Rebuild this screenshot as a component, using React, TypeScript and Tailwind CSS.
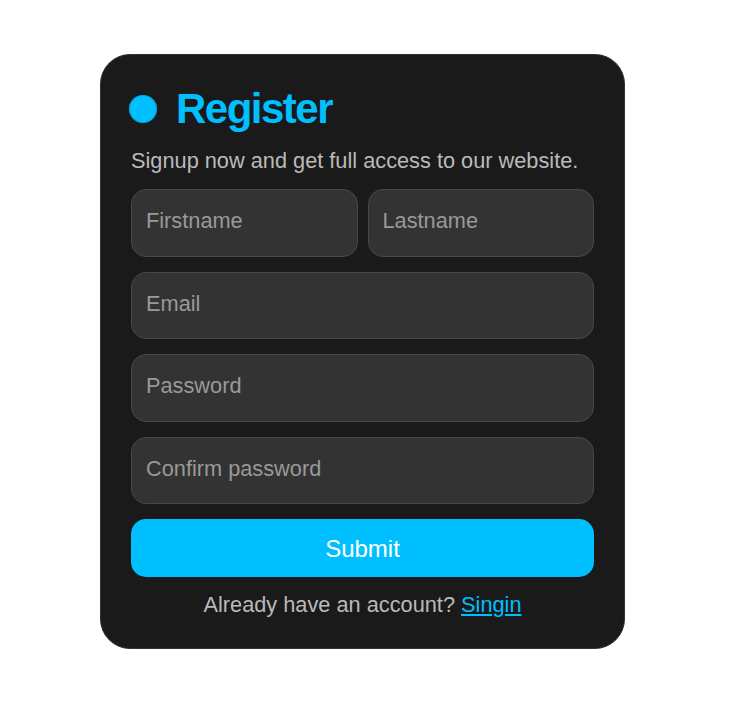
import React from "react";

export default function App() {
  const inputCls =
    "block w-full h-[67.5px] rounded-[15px] border-[1.5px] border-[#484848] bg-[#333333] px-[14px] pb-[4px] text-[21.75px] text-white placeholder:text-[#999999] outline-none";
  return (
    <div
      className="min-h-[726px] bg-white pl-[100px] pt-[54px]"
      style={{ fontFamily: '"Liberation Sans", Arial, sans-serif' }}
    >
      <form
        className="flex w-[525px] flex-col gap-[15px] rounded-[30px] border-[1.5px] border-[#333333] bg-[#1a1a1a] p-[30px] text-white"
        onSubmit={(e) => e.preventDefault()}
      >
        <div className="flex items-center gap-[19px]">
          <span className="ml-[-2px] block h-[28px] w-[28px] shrink-0 rounded-full bg-[#00bfff] shadow-[inset_0_0_0_1px_rgba(0,120,170,0.35)]" />
          <h1 className="text-[42px] font-bold leading-[1.15] tracking-[-1.5px] text-[#00bfff]">
            Register
          </h1>
        </div>
        <p className="text-[21.75px] leading-[26px] text-[#bababa]">
          Signup now and get full access to our website.
        </p>
        <div className="flex gap-[10px]">
          <input className={inputCls} placeholder="Firstname" />
          <input className={inputCls} placeholder="Lastname" />
        </div>
        <input className={inputCls} placeholder="Email" type="email" />
        <input className={inputCls} placeholder="Password" type="password" />
        <input className={inputCls} placeholder="Confirm password" type="password" />
        <button
          type="submit"
          className="h-[58px] w-full rounded-[15px] bg-[#00bfff] text-[24px] leading-[1.15] text-white"
        >
          Submit
        </button>
        <p className="text-center text-[21.75px] leading-[26px] text-[#bababa]">
          Already have an account?{" "}
          <a href="#" className="text-[#00bfff] underline">
            Singin
          </a>
        </p>
      </form>
    </div>
  );
}
